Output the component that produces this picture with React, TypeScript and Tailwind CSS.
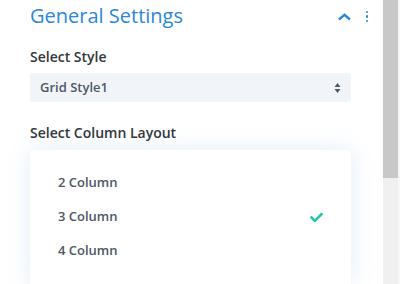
import { FaCheck } from "react-icons/fa";

const options = ["2 Column", "3 Column", "4 Column"];

export default function App() {
  const selected = "3 Column";

  return (
    <div className="flex h-[284px] w-[400px] overflow-hidden bg-white font-['Open_Sans',sans-serif]">
      <div className="relative w-[383px] shrink-0 pl-[30px] pr-[32px]">
        <div className="-mr-[17px] flex h-[32px] items-center justify-between">
          <h2 className="text-[20px] font-normal leading-none text-[#2b87da]">
            General Settings
          </h2>
          <div className="flex items-center gap-[15px]">
            <svg width="13" height="8" viewBox="0 0 13 8" className="mt-[2px]">
              <path d="M1 6.5 L6.5 1.8 L12 6.5" fill="none" stroke="#2b87da" strokeWidth="2.4" />
            </svg>
            <div className="flex flex-col gap-[2px] pt-[1px]">
              <span className="h-[2.5px] w-[2.5px] rounded-full bg-[#2b87da]" />
              <span className="h-[2.5px] w-[2.5px] rounded-full bg-[#2b87da]" />
              <span className="h-[2.5px] w-[2.5px] rounded-full bg-[#2b87da]" />
            </div>
          </div>
        </div>

        <div className="mt-[15px] text-[14px] font-semibold leading-[20px] text-[#32373c]">
          Select Style
        </div>
        <div className="mt-[6px] flex h-[29px] w-[321px] items-center justify-between rounded-[3px] bg-[#f1f5f9] pl-[10px] pr-[10px]">
          <span className="text-[13px] font-semibold text-[#4c5866]">Grid Style1</span>
          <svg width="7" height="12" viewBox="0 0 7 12">
            <path d="M3.5 1 L6.5 5 L0.5 5 Z" fill="#4c5866" />
            <path d="M3.5 11 L6.5 7 L0.5 7 Z" fill="#4c5866" />
          </svg>
        </div>

        <div className="mt-[21px] text-[14px] font-semibold leading-[20px] text-[#32373c]">
          Select Column Layout
        </div>
        <div className="mt-[7px] w-[321px] rounded-[3px] bg-white pb-[18px] pt-[16px] shadow-[0_0_24px_rgba(43,135,218,0.14)]">
          {options.map((o) => (
            <div key={o} className="flex h-[34px] items-center justify-between pl-[28px] pr-[28px]">
              <span className="text-[13px] font-semibold text-[#4c5866]">{o}</span>
              {o === selected && <FaCheck size={13} className="text-[#29c4a9]" />}
            </div>
          ))}
        </div>
      </div>
      <div className="flex w-[15px] shrink-0 flex-col bg-[#f0f0f0]">
        <div className="h-[178px] bg-[#c8c8c8]" />
      </div>
      <div className="w-[2px] shrink-0 bg-[#f5f8fb]" />
    </div>
  );
}
